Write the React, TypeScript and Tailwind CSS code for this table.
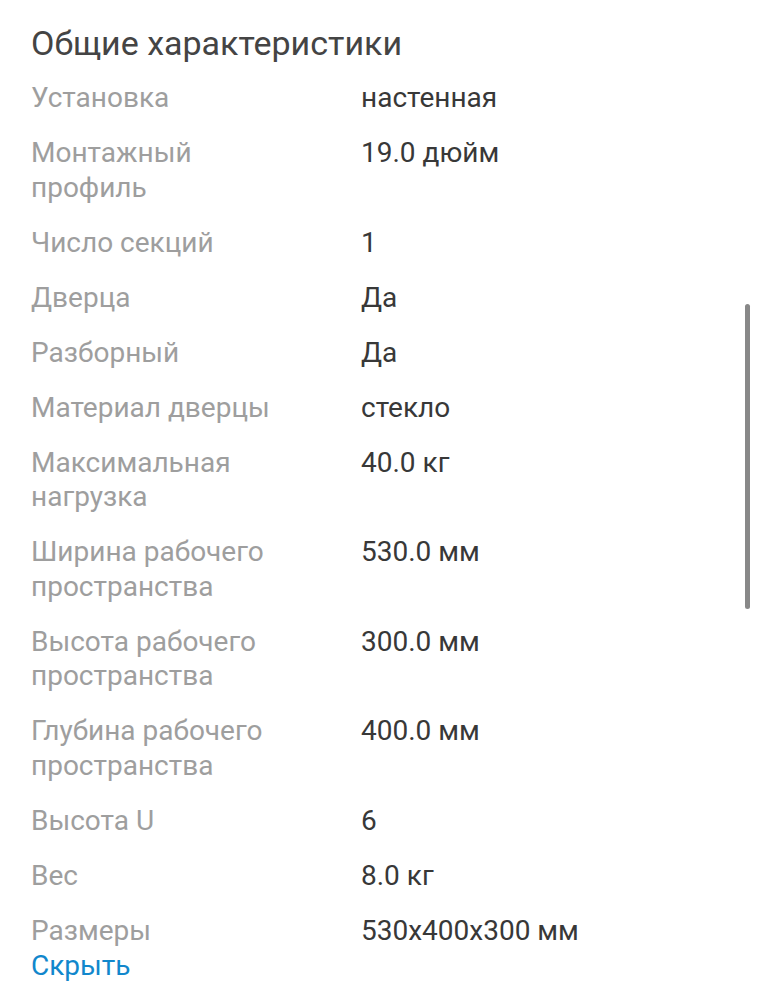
const specs: [string, string][] = [
  ['Установка', 'настенная'],
  ['Монтажный профиль', '19.0 дюйм'],
  ['Число секций', '1'],
  ['Дверца', 'Да'],
  ['Разборный', 'Да'],
  ['Материал дверцы', 'стекло'],
  ['Максимальная нагрузка', '40.0 кг'],
  ['Ширина рабочего пространства', '530.0 мм'],
  ['Высота рабочего пространства', '300.0 мм'],
  ['Глубина рабочего пространства', '400.0 мм'],
  ['Высота U', '6'],
  ['Вес', '8.0 кг'],
  ['Размеры', '530x400x300 мм'],
];

export default function App() {
  return (
    <div className="relative w-[757px] h-[1000px] bg-white overflow-hidden font-['Roboto',sans-serif]">
      <div className="pl-[31px] pt-[23px]">
        <h2 className="text-[34px] leading-[40px] text-[#444444]">Общие характеристики</h2>
        <div className="mt-[18px] flex flex-col gap-[20.4px]">
          {specs.map(([label, value]) => (
            <div key={label} className="flex text-[28px] leading-[34.6px]">
              <div className="w-[262px] text-[#9e9e9e]">{label}</div>
              <div className="ml-[68px] text-[#383838]">{value}</div>
            </div>
          ))}
        </div>
        <a href="#" className="block text-[28px] leading-[35px] text-[#1187cc]">Скрыть</a>
      </div>
      <div className="absolute left-[745px] top-[304px] w-[5px] h-[305px] rounded-full bg-[#888888]" />
    </div>
  );
}
